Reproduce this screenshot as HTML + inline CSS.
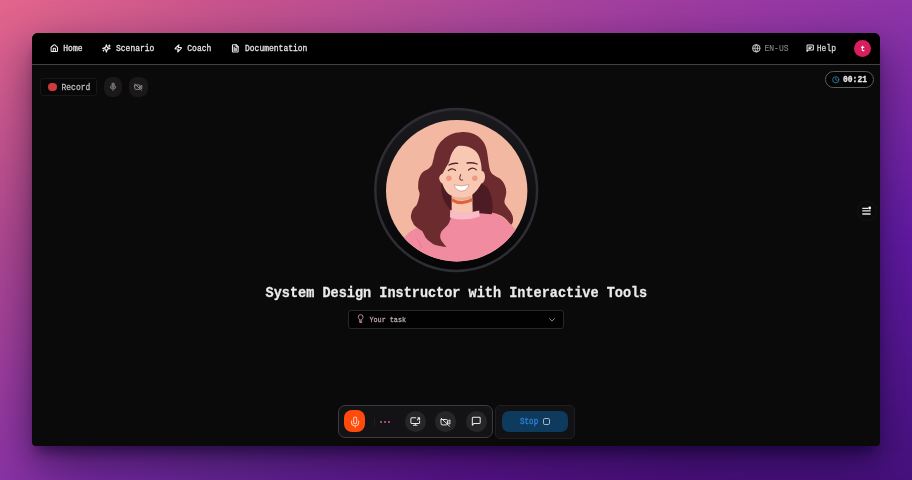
<!DOCTYPE html>
<html>
<head>
<meta charset="utf-8">
<style>
*{box-sizing:border-box;margin:0;padding:0}
html,body{width:912px;height:480px;overflow:hidden}
body{font-family:"Liberation Mono",monospace;position:relative;
 background:linear-gradient(to right,#8b33a5 0%,#73289e 11%,#652594 25%,#58138a 50%,#4b107d 75%,#47117d 100%);}
#bgm,#bgt{position:absolute;left:0;top:0;width:912px;height:480px}
#bgm{background:linear-gradient(to right,#ae4890 0%,#611aa3 100%);-webkit-mask-image:linear-gradient(to bottom,#000 0%,#000 50%,transparent 100%);mask-image:linear-gradient(to bottom,#000 0%,#000 50%,transparent 100%)}
#bgt{background:linear-gradient(to right,#e3668c 0%,#c8548c 25%,#b04a98 50%,#9e3ca0 75%,#8e35a8 100%);-webkit-mask-image:linear-gradient(to bottom,#000 0%,transparent 50%);mask-image:linear-gradient(to bottom,#000 0%,transparent 50%)}
.abs{position:absolute}
#win{will-change:transform;position:absolute;left:32px;top:33px;width:848px;height:413px;background:#0a0a0a;border-radius:6px 6px 4px 4px;
 box-shadow:0 16px 40px rgba(5,0,30,.5),0 10px 12px -4px rgba(5,0,30,.4);overflow:hidden}
#nav{position:absolute;left:0;top:0;width:848px;height:31px;background:#000}
#navline{position:absolute;left:0;top:31px;width:848px;height:1px;background:#434343}
.t{-webkit-text-stroke:.25px currentColor;position:absolute;white-space:pre;font-size:8px;line-height:10px;color:#e4e4e4;transform-origin:0 50%;transform:scaleY(1.15)}
svg{position:absolute;overflow:visible}
.ic{fill:none;stroke:#ececec;stroke-width:3;stroke-linecap:round;stroke-linejoin:round}
</style>
</head>
<body>
<div id="bgm"></div><div id="bgt"></div>
<div id="win">
 <div id="nav"></div>
 <div id="navline"></div>

 <!-- NAV LEFT (coords relative to win: x-32, y-33) -->
 <svg class="ic" style="left:17.9px;top:10.6px" width="8.6" height="8.6" viewBox="0 0 24 24"><path d="M15 21v-8a1 1 0 0 0-1-1h-4a1 1 0 0 0-1 1v8"/><path d="M3 10a2 2 0 0 1 .709-1.528l7-5.999a2 2 0 0 1 2.582 0l7 5.999A2 2 0 0 1 21 10v9a2 2 0 0 1-2 2H5a2 2 0 0 1-2-2z"/></svg>
 <div class="t" style="left:31.3px;top:10.900px">Home</div>

 <svg class="ic" style="left:70.4px;top:10.8px" width="8.8" height="8.8" viewBox="0 0 24 24"><path d="M9.937 15.5A2 2 0 0 0 8.5 14.063l-6.135-1.582a.5.5 0 0 1 0-.962L8.5 9.936A2 2 0 0 0 9.937 8.5l1.582-6.135a.5.5 0 0 1 .963 0L14.063 8.5A2 2 0 0 0 15.5 9.937l6.135 1.581a.5.5 0 0 1 0 .964L15.5 14.063a2 2 0 0 0-1.437 1.437l-1.582 6.135a.5.5 0 0 1-.963 0z"/><path d="M20 3v4M22 5h-4M4 17v2M5 18H3"/></svg>
 <div class="t" style="left:84px;top:10.900px">Scenario</div>

 <svg class="ic" style="left:142.2px;top:10.8px" width="8.6" height="8.6" viewBox="0 0 24 24"><path d="M4 14a1 1 0 0 1-.78-1.63l9.9-10.2a.5.5 0 0 1 .86.46l-1.92 6.02A1 1 0 0 0 13 10h7a1 1 0 0 1 .78 1.63l-9.9 10.2a.5.5 0 0 1-.86-.46l1.92-6.02A1 1 0 0 0 11 14z"/></svg>
 <div class="t" style="left:155.300px;top:10.900px">Coach</div>

 <svg class="ic" style="left:199px;top:11.3px" width="8.6" height="8.7" viewBox="0 0 24 24"><path d="M15 2H6a2 2 0 0 0-2 2v16a2 2 0 0 0 2 2h12a2 2 0 0 0 2-2V7Z"/><path d="M14 2v4a2 2 0 0 0 2 2h4M10 9H8M16 13H8M16 17H8"/></svg>
 <div class="t" style="left:213px;top:10.900px">Documentation</div>

 <!-- NAV RIGHT -->
 <svg class="ic" style="left:719.500px;top:11.300px;stroke:#b8b8b8" width="8.600" height="8.600" viewBox="0 0 24 24"><circle cx="12" cy="12" r="10"/><path d="M2 12h20M12 2a15 15 0 0 1 0 20 15 15 0 0 1 0-20"/></svg>
 <div class="t" style="left:732.500px;top:10.900px;color:#858585;-webkit-text-stroke:.1px #858585">EN-US</div>

 <svg class="ic" style="left:774.300px;top:11.300px" width="8.400" height="8.400" viewBox="0 0 24 24"><path d="M21 15a2 2 0 0 1-2 2H7l-4 4V5a2 2 0 0 1 2-2h14a2 2 0 0 1 2 2z"/><path d="M8 9h8M8 13h5"/></svg>
 <div class="t" style="left:784.8px;top:10.9px;color:#d8d8d8">Help</div>

 <div class="abs" style="left:822px;top:6.500px;width:17px;height:17px;border-radius:50%;background:#d81e5e"></div>
 <div class="t" style="left:828.400px;top:10.600px;left:828.800px;color:#fff;font-size:7px">t</div>

 <!-- RECORD CONTROLS -->
 <div class="abs" style="left:8.4px;top:45.2px;width:56.8px;height:17.8px;border:1px solid #171717;border-radius:3px;background:#080808"></div>
 <div class="abs" style="left:16.4px;top:49.7px;width:8.3px;height:8.3px;border-radius:50%;background:#cf3b3d"></div>
 <div class="t" style="left:29.500px;top:50px;color:#bebebe">Record</div>
 <div class="abs" style="left:72.2px;top:44.4px;width:18px;height:19.2px;border-radius:8px;background:#1a1818"></div>
 <svg class="ic" style="left:77.4px;top:49.3px;stroke:#707070" width="8.2" height="9.4" viewBox="1 0 22 24"><rect x="9" y="2" width="6" height="12" rx="3" fill="#707070"/><path d="M5 11a7 7 0 0 0 14 0M12 18v4"/></svg>
 <div class="abs" style="left:97.3px;top:44.400px;width:18.6px;height:19.2px;border-radius:8px;background:#1a1818"></div>
 <svg class="ic" style="left:102.3px;top:50px;stroke:#8c8c8c" width="9" height="8" viewBox="0 0 26 24"><path d="M2 6h13a2 2 0 0 1 2 2v9a2 2 0 0 1-2 2H4a2 2 0 0 1-2-2zM17 11l6-4v10l-6-4M2 3l20 19"/></svg>

 <!-- TIMER -->
 <div class="abs" style="left:792.500px;top:38px;width:49px;height:17px;border:1px solid #5c5c5c;border-radius:9px;background:#030303"></div>
 <svg class="ic" style="left:800.300px;top:42.500px;stroke:#3089b0;stroke-width:2.600" width="7.500" height="7.500" viewBox="0 0 24 24"><circle cx="12" cy="12" r="10"/><path d="M12 6v6l4 2"/></svg>
 <div class="t" style="left:811px;top:42.1px;font-weight:bold;color:#e8e8e8">00:21</div>

 <!-- AVATAR -->
 <svg style="left:340px;top:73px" width="168" height="168" viewBox="340 73 168 168"><defs><linearGradient id="rg" x1="0" y1="0" x2="0" y2="1"><stop offset="0" stop-color="#1b1b1f"/><stop offset=".45" stop-color="#111114"/><stop offset="1" stop-color="#050506"/></linearGradient></defs><circle cx="424.2" cy="157" r="80.9" fill="url(#rg)" stroke="#2d2d33" stroke-width="2.5"/></svg>
 <svg id="av" style="left:353.600px;top:86.800px" width="141.400" height="141.400" viewBox="385.300 119.800 141.400 141.400">
  <defs><clipPath id="cc"><circle cx="456" cy="190.500" r="70.700"/></clipPath></defs>
  <g clip-path="url(#cc)">
   <rect x="380" y="115" width="152" height="152" fill="#f3b8a1"/>
   <!-- sweater -->
   <path d="M449 211 L478 212 L487.5 211.3 C493 212.5 499 215 504 218.5 C510 223 515 229 519 236 L530 270 L380 270 L398 243 L408 232.6 C412 229.5 416 227.5 420 225.5 C430 218 440 212 449 211Z" fill="#f18ba0"/><path d="M416.2 238.6 Q419.5 243 421.3 247.4" fill="none" stroke="#e2718c" stroke-width=".8"/>
   <!-- hair -->
   <path id="hair" d="M460 132 C470 131 479 135 483.5 143 C487.5 150 487 162 489.5 170.5 C491 175 497 176.5 500 179 C504 183 506 188 505.5 193 C505 198 503 200 504 203 C505 206 510 210 512 216 C513 220 512 223.5 510.5 224.5 C508 222 506 219.5 503.7 217.5 C500 214.5 495 213 487.5 211.5 L478 213 L451.6 211 C450.8 215 450 220 447.6 224 C445.5 227 441.5 229 440 233 C439 236 439.5 239 441 240.8 C442.5 243 444.5 245.5 446.1 246.8 C440 246.2 435 245 432.3 243.7 C428 241 425.5 238.5 424.3 236.4 C423 233.5 422 231.5 421.3 230.6 C419.5 230 418.5 229 417.7 228.4 C414 226 412.5 224 411.9 221.9 C410.3 219 409.8 216.5 410.4 214.6 C411 210 413.5 207 415.8 205 C418 201 418.5 196 419 193.3 C418 190 417 188 417.5 186 C417.3 181 418.5 176.5 420.8 173.3 C423 170.5 426 169.5 427.5 168.7 C430.5 166.5 431.5 164.5 431.7 163.3 C432.5 160 433 158 433.3 156.7 C434 153 434.8 150.5 435.8 148.3 C437.5 144.5 439.5 142 441.7 140 C444.5 137 447.5 135.3 450 134.2 C453.5 132.8 457 132.1 460 132Z" fill="#6b2b2f"/>
   <!-- dark hair behind neck -->
   <path d="M441 183 C439.500 194 443.500 204 451.600 211 L478 213 L491 214 C493.500 205 491 194 486.500 187 L480.600 183 Z" fill="#4c1b23"/>
   <!-- neck -->
   <path d="M451 190 L451 211 Q461 216 472 212 L471.5 190 Z" fill="#f7c5b0"/>
   <ellipse cx="461" cy="197.2" rx="10" ry="2.6" fill="#eeab95"/>
   <!-- collar -->
   <path d="M449.5 209.8 Q463 214.5 478.5 210.3 L479 216.3 Q463 222 449.2 217.2 Z" fill="#f8bcc6"/>
   <!-- choker -->
   <path d="M451.1 199.6 Q461 205.4 471.8 199.3" fill="none" stroke="#df6238" stroke-width="3.1"/>
   <!-- face -->
   <path d="M457.3 145.8 C452 149 449.5 156 448.5 161.5 C446 166 443 171 442.3 173 C439.5 174.500 438 177 438.5 178.5 C439 181.5 441 183 441.6 183.3 C443 187.5 445 191 447.5 193.5 C451 196.3 455.5 197.4 460.5 197.4 C465 197.4 469 196.2 471.5 194.5 C475.5 191.5 478.5 187.5 480.6 183.3 C483.5 183 485 178 484 174 C483.3 171.5 481.8 170.5 481 171 C481 163 479 154 474 150 C469 146 462 145 457.3 145.8Z" fill="#f8c8b3"/>
   <circle cx="448.2" cy="178" r="2.7" fill="#f0826e" fill-opacity=".7"/>
   <circle cx="474.1" cy="178" r="2.7" fill="#f0826e" fill-opacity=".7"/>
   <g fill="none" stroke="#5e2427" stroke-linecap="round">
    <path d="M447.6 170.4 Q451 167 454.8 170.1" stroke-width="1.2"/>
    <path d="M467.8 169.8 Q471.600 166.4 475.600 169.600" stroke-width="1.2"/>
    <path d="M448.2 164.800 Q452 162.600 457 163.2" stroke-width="1.3"/>
    <path d="M466.400 162.800 Q471.500 162 476.500 163.800" stroke-width="1.3"/>
    <path d="M459.900 174.400 Q458.400 178.300 459.300 179.400 Q460.500 180.400 462 179.800" stroke-width="1"/>
   </g>
   <path d="M453.400 184.600 Q461 187 468.300 184.400 Q466.300 190.900 460.900 190.900 Q455.600 190.900 453.400 184.600Z" fill="#fff" stroke="#b8746c" stroke-width=".5" stroke-linejoin="round"/>
  </g>
 </svg>

 <!-- SIDE ICON -->
 <div class="abs" style="left:824.5px;top:167.5px;width:20px;height:20px;border-radius:50%;border:1px solid rgba(255,255,255,.035)"></div>
 <svg style="left:829px;top:173px" width="12" height="10" viewBox="861 206 12 10"><path d="M862.300 208.400h6M862.300 210.800h8.300M862.300 214h8.300" stroke="#e8e8e8" stroke-width="1.300" fill="none"/><circle cx="869.700" cy="208" r="1.400" fill="#fff"/></svg>

 <!-- TITLE -->
 <div class="t" id="title" style="left:233.600px;top:252.800px;font-size:13.540px;line-height:16px;font-weight:bold;color:#ebebeb;transform:scaleY(1.06)">System Design Instructor with Interactive Tools</div>

 <!-- DROPDOWN -->
 <div class="abs" style="left:316.300px;top:277.300px;width:215.700px;height:19.200px;border:1px solid #272728;border-radius:3px;background:#020202"></div>
 <svg class="ic" style="left:324.800px;top:281px;stroke:#b89090;stroke-width:2.400" width="7.300" height="9.800" viewBox="2 1 18 24"><path d="M8 14c-2-1.500-3-3-3-5.500a6 6 0 0 1 12 0c0 2.500-1 4-3 5.500v2H8zM8 19h6M9 22h4"/></svg>
 <div class="t" style="left:337.400px;top:282px;font-size:6.800px;color:#bba8a8">Your task</div>
 <svg class="ic" style="left:517.300px;top:285px;stroke:#6fa0b8;stroke-width:1.9" width="6" height="3.700" viewBox="0 0 12 7"><path d="M1 1l5 5 5-5"/></svg>

 <!-- BOTTOM CONTROLS -->
 <div class="abs" style="left:306px;top:371.800px;width:154.500px;height:33.200px;border:1px solid #3c3c40;border-radius:7px;background:#131315"></div>
 <div class="abs" style="left:311.9px;top:377.4px;width:21.4px;height:21.7px;border-radius:8px;background:#ff4a0d"></div>
 <svg class="ic" style="left:316.5px;top:382.6px;stroke:#ffcdb6;stroke-width:2" width="12.3" height="12.3" viewBox="0 0 24 24"><path d="M12 2a3 3 0 0 0-3 3v7a3 3 0 0 0 6 0V5a3 3 0 0 0-3-3Z"/><path d="M19 10v2a7 7 0 0 1-14 0v-2M12 19v3"/></svg>
 <div class="abs" style="left:342.200px;top:385px;width:1px;height:8px;background:#1e1e21"></div>
 <div class="abs" style="left:347.700px;top:387.700px;width:2.200px;height:2.200px;border-radius:50%;background:#d455a4"></div>
 <div class="abs" style="left:352px;top:387.700px;width:2.200px;height:2.200px;border-radius:50%;background:#d455a4"></div>
 <div class="abs" style="left:356.300px;top:387.700px;width:2.200px;height:2.200px;border-radius:50%;background:#d455a4"></div>

 <div class="abs" style="left:372.600px;top:378px;width:21.400px;height:21px;border-radius:50%;background:#262628"></div>
 <svg class="ic" style="left:378px;top:383px;stroke-width:2.300" width="10.500" height="10.500" viewBox="0 0 24 24"><path d="M13 4H4a2 2 0 0 0-2 2v9a2 2 0 0 0 2 2h16a2 2 0 0 0 2-2v-4M8 21h8M12 17v4M17 9l5-5M18 4h4v4"/></svg>
 <div class="abs" style="left:403px;top:378px;width:21.400px;height:21px;border-radius:50%;background:#262628"></div>
 <svg class="ic" style="left:408px;top:383.500px;stroke-width:2.300" width="11.500" height="10" viewBox="0 0 26 24"><path d="M2 6h13a2 2 0 0 1 2 2v9a2 2 0 0 1-2 2H4a2 2 0 0 1-2-2zM17 11l6-4v10l-6-4M2 3l20 19"/></svg>
 <div class="abs" style="left:433.700px;top:378px;width:21px;height:21px;border-radius:50%;background:#262628"></div>
 <svg class="ic" style="left:439px;top:382.900px;stroke-width:2.300" width="10.500" height="10.500" viewBox="0 0 24 24"><path d="M21 15a2 2 0 0 1-2 2H7l-4 4V5a2 2 0 0 1 2-2h14a2 2 0 0 1 2 2z"/></svg>

 <div class="abs" style="left:463px;top:372px;width:80px;height:33.500px;border:1px solid #1f1f22;border-radius:5px;background:#121214"></div>
 <div class="abs" style="left:469.500px;top:377.700px;width:66.500px;height:21px;border-radius:7px;background:#0e3a5e"></div>
 <div class="t" style="left:488px;top:384.200px;font-size:7.6px;color:#3080d4">Stop</div>
 <div class="abs" style="left:511.200px;top:385px;width:7.200px;height:6.800px;border:1.300px solid #a9b6c4;border-radius:1.800px"></div>
</div>
</body>
</html>
